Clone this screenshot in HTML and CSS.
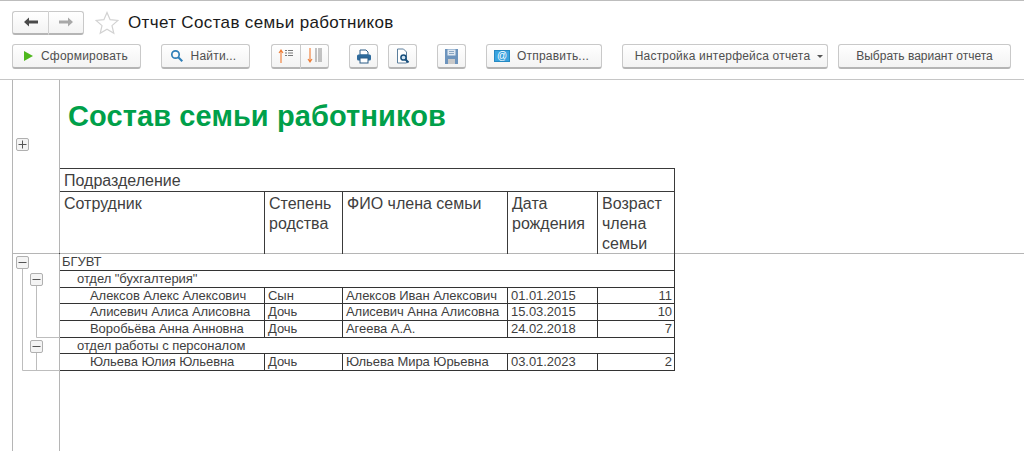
FILE: index.html
```html
<!DOCTYPE html>
<html lang="ru">
<head>
<meta charset="utf-8">
<title>Отчет Состав семьи работников</title>
<link rel="stylesheet" href="styles.css">
</head>
<body>
<div class="titlebar">
  <div class="btn-group nav-group">
    <button class="btn nav-btn"><svg width="16" height="10" viewBox="0 0 16 10"><path d="M1 5l5-4.500v3h9v3H6v3z" fill="#4a4a4a"/></svg></button>
    <button class="btn nav-btn"><svg width="16" height="10" viewBox="0 0 16 10"><path d="M15 5l-5-4.500v3H1v3h9v3z" fill="#a8a8a8"/></svg></button>
  </div>
  <svg class="star" width="24" height="24" viewBox="0 0 24 24"><path d="M12 1.500l3.100 7.200 7.800.7-5.900 5.200 1.800 7.700L12 18.200l-6.800 4.100 1.800-7.700L1.100 9.400l7.800-.7z" fill="#fff" stroke="#d2d2d2" stroke-width="1.200"/></svg>
  <h1 class="page-title">Отчет Состав семьи работников</h1>
</div>
<div class="toolbar">
  <button class="btn w-form"><svg class="ico" width="12" height="12" viewBox="0 0 12 12"><path d="M2 1l9 5-9 5z" fill="#4fb81e"/></svg>Сформировать</button>
  <button class="btn w-find gap-20"><svg class="ico" width="14" height="14" viewBox="0 0 14 14"><circle cx="5.500" cy="5.500" r="3.700" fill="none" stroke="#2f7fb8" stroke-width="1.700"/><path d="M8.300 8.300l4 4" stroke="#2f7fb8" stroke-width="2"/></svg>Найти...</button>
  <div class="btn-group gap-21">
    <button class="btn sq-sort"><svg width="18" height="16" viewBox="0 0 18 16"><path d="M4 15V2M2 5l2-3 2 3" fill="none" stroke="#ee7b33" stroke-width="1.100"/><path d="M8 2.500h8M8 5h8M8 7.500h8" stroke="#777" stroke-width="1.100" stroke-dasharray="2 1 5"/></svg></button>
    <button class="btn sq-sort"><svg width="18" height="18" viewBox="0 0 18 18"><path d="M4 1v14M2 12l2 3 2-3" fill="none" stroke="#ee7b33" stroke-width="1.100"/><path d="M9 2h7M9 4h7M9 6h7M9 8h7M9 10h7M9 12h7M9 14h7" stroke="#8a8a8a" stroke-width="1" stroke-dasharray="2 1 4"/></svg></button>
  </div>
  <button class="btn sq gap-20"><svg width="16" height="15" viewBox="0 0 16 15"><path d="M4 1h6l2 2v3H4z" fill="#fff" stroke="#2d5d86"/><rect x="1" y="5.500" width="14" height="6" rx="1.500" fill="#2d6a9c"/><rect x="4" y="9" width="8" height="5" fill="#fff" stroke="#2d5d86"/></svg></button>
  <button class="btn sq gap-10"><svg width="16" height="17" viewBox="0 0 16 17"><path d="M2.500 1h6l3 3v11h-9z" fill="#fff" stroke="#5c7f9c"/><circle cx="8.500" cy="9.500" r="2.600" fill="#cfe3f2" stroke="#174f7c" stroke-width="1.500"/><path d="M10.500 11.500l3 3" stroke="#174f7c" stroke-width="2"/></svg></button>
  <button class="btn sq gap-20"><svg width="15" height="17" viewBox="0 0 15 17"><path d="M1 1h13v15H1z" fill="#6d94bd"/><rect x="3.500" y="1.500" width="8" height="6" fill="#dfe8f1"/><path d="M5 3.500h5M5 5.500h5" stroke="#8aa6c3"/><rect x="4" y="11" width="7" height="5" fill="#c9c9c9"/></svg></button>
  <button class="btn w-send gap-20"><span class="mail">@</span>Отправить...</button>
  <button class="btn w-set gap-20">Настройка интерфейса отчета<span class="caret"></span></button>
  <button class="btn w-var gap-10">Выбрать вариант отчета</button>
</div>
<main class="sheet">
  <section class="zone zone-head">
    <div class="gutter gutter-head">
      <span class="tree-box"><svg width="11" height="11" viewBox="0 0 11 11"><path d="M1.500 5.500h8M5.500 1.500v8" stroke="#555"/></svg></span>
    </div>
    <div class="zone-main">
      <h2 class="report-title">Состав семьи работников</h2>
      <table class="grid head-grid">
        <colgroup><col class="c1"><col class="c2"><col class="c3"><col class="c4"><col class="c5"></colgroup>
        <tr class="hr1"><th colspan="5">Подразделение</th></tr>
        <tr class="hr2"><th>Сотрудник</th><th>Степень родства</th><th>ФИО члена семьи</th><th>Дата рождения</th><th>Возраст члена семьи</th></tr>
      </table>
    </div>
  </section>
  <section class="zone zone-body">
    <div class="gutter gutter-body">
      <svg class="tree-lines" width="47" height="118" viewBox="0 0 47 118"><path d="M9.500 14v102.500H47M23.500 32v51.500H47M23.500 99v17" fill="none" stroke="#bdbdbd"/></svg>
      <span class="tree-box t1"><svg width="11" height="11" viewBox="0 0 11 11"><path d="M1.500 5.500h8" stroke="#555"/></svg></span>
      <span class="tree-box t2"><svg width="11" height="11" viewBox="0 0 11 11"><path d="M1.500 5.500h8" stroke="#555"/></svg></span>
      <span class="tree-box t3"><svg width="11" height="11" viewBox="0 0 11 11"><path d="M1.500 5.500h8" stroke="#555"/></svg></span>
    </div>
    <table class="grid body-grid">
      <colgroup><col class="c1"><col class="c2"><col class="c3"><col class="c4"><col class="c5"></colgroup>
      <tr class="lvl0"><td colspan="5">БГУВТ</td></tr>
      <tr class="lvl1 tall"><td colspan="5">отдел "бухгалтерия"</td></tr>
      <tr><td class="lvl2">Алексов Алекс Алексович</td><td>Сын</td><td>Алексов Иван Алексович</td><td>01.01.2015</td><td class="num">11</td></tr>
      <tr class="tall"><td class="lvl2">Алисевич Алиса Алисовна</td><td>Дочь</td><td>Алисевич Анна Алисовна</td><td>15.03.2015</td><td class="num">10</td></tr>
      <tr class="tall"><td class="lvl2">Воробьёва Анна Анновна</td><td>Дочь</td><td>Агеева А.А.</td><td>24.02.2018</td><td class="num">7</td></tr>
      <tr class="lvl1"><td colspan="5">отдел работы с персоналом</td></tr>
      <tr class="tall"><td class="lvl2">Юльева Юлия Юльевна</td><td>Дочь</td><td>Юльева Мира Юрьевна</td><td>03.01.2023</td><td class="num">2</td></tr>
    </table>
  </section>
</main>
</body>
</html>
```
FILE: styles.css
```css
* { box-sizing: border-box; }
html, body { margin: 0; height: 451px; overflow: hidden; background: #fff; }
body {
  font-family: "Liberation Sans", Arial, sans-serif;
  color: #3f3f3f;
  border-top: 1px solid #bdbdbd;
}
.titlebar {
  display: flex;
  align-items: center;
  height: 34px;
  padding: 9px 0 0 12px;
}
.btn {
  display: flex;
  align-items: center;
  justify-content: center;
  height: 25px;
  padding: 0;
  font: 12px "Liberation Sans", Arial, sans-serif;
  letter-spacing: 0.2px;
  color: #4f4f4f;
  background: linear-gradient(#ffffff, #f3f3f3);
  border: 1px solid #c9c9c9;
  border-bottom: 2px solid #b5b5b5;
  border-radius: 3px;
}
.btn-group { display: flex; }
.btn-group .btn:first-child { border-radius: 3px 0 0 3px; border-right: 0; }
.btn-group .btn:last-child { border-radius: 0 3px 3px 0; }
.nav-group { height: 24px; }
.nav-btn { width: 36px; height: 24px; }
.nav-btn:last-child { border-left: 1px solid #d0d0d0; }
.star { margin-left: 11px; }
.page-title {
  margin: 0 0 0 9px;
  font-size: 17px;
  font-weight: 400;
  letter-spacing: 0.35px;
  color: #1a1a1a;
}
.toolbar {
  display: flex;
  height: 45px;
  padding: 9px 0 0 12px;
  border-bottom: 1px solid #c6c6c6;
}
.ico { margin-right: 7px; }
.w-form { width: 129px; padding-right: 3px; }
.w-find { width: 89px; padding-right: 5px; }
.w-send { width: 116px; padding-right: 5px; }
.w-set { width: 206px; padding-left: 8px; }
.w-var { width: 173px; letter-spacing: 0; }
.sq { width: 29px; }
.sq-sort { width: 29px; }
.gap-10 { margin-left: 10px; }
.gap-20 { margin-left: 20px; }
.gap-21 { margin-left: 21px; }
.mail {
  width: 16px;
  height: 12px;
  margin-right: 7px;
  font-size: 10px;
  line-height: 10px;
  letter-spacing: 0;
  color: #fff;
  background: #3aa3df;
  border: 1px solid #2589c2;
}
.caret {
  width: 0;
  height: 0;
  margin-left: 7px;
  border: 3px solid transparent;
  border-top: 3px solid #555;
  border-bottom: 0;
}
.sheet { margin-left: 12px; border-left: 1px solid #b5b5b5; height: 371px; }
.zone { display: flex; align-items: flex-start; }
.zone-head { height: 174px; border-bottom: 1px solid #b5b5b5; }
.gutter {
  position: relative;
  flex: none;
  align-self: stretch;
  width: 47px;
  border-right: 1px solid #b5b5b5;
}
.gutter-head { padding: 58px 0 0 3px; }
.zone-body { height: 197px; }
.tree-box {
  display: flex;
  align-items: center;
  justify-content: center;
  width: 13px;
  height: 13px;
  background: #f4f4f4;
  border: 1px solid #b0b0b0;
  border-radius: 2px;
}
.tree-lines { position: absolute; left: 0; top: 0; }
.t1, .t2, .t3 { position: absolute; }
.t1 { left: 3px; top: 2px; }
.t2 { left: 17px; top: 19px; }
.t3 { left: 17px; top: 86px; }
.zone-main { display: flex; flex-direction: column; }
.report-title {
  height: 88px;
  margin: 0;
  padding: 18px 0 0 8px;
  font-size: 29px;
  line-height: 36px;
  font-weight: 700;
  letter-spacing: 0.1px;
  color: #00a04a;
  white-space: nowrap;
}
.grid {
  width: 615px;
  table-layout: fixed;
  border-collapse: collapse;
  margin-left: -1px;
}
.c1 { width: 205px; }
.c2 { width: 78px; }
.c3 { width: 165px; }
.c4 { width: 90px; }
.c5 { width: 77px; }
th {
  padding: 0 4px;
  font-size: 16px;
  font-weight: 400;
  line-height: 20px;
  text-align: left;
  vertical-align: top;
  border: 1px solid #3a3a3a;
  border-bottom: 0;
  overflow: hidden;
}
.hr1 th { height: 23px; padding-top: 2px; }
.hr2 th { height: 62px; padding-top: 2px; }
td {
  height: 16px;
  padding: 0 3px;
  font-size: 13px;
  line-height: 15px;
  letter-spacing: -0.05px;
  white-space: nowrap;
  overflow: hidden;
  border: 1px solid #333;
}
.tall td { height: 17px; }
.lvl0 td { padding-left: 2px; border-top: 0; }
.lvl1 td { padding-left: 17px; }
td.lvl2 { padding-left: 30px; }
.num { text-align: right; padding-right: 2px; }
```
